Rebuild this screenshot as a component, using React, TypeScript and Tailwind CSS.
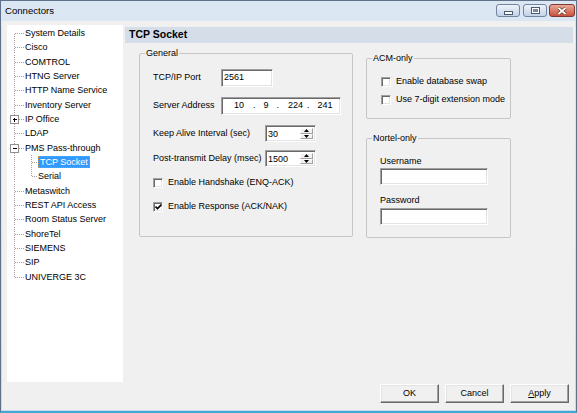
import React from "react";

type Node = {
  label: string;
  expander?: "plus" | "minus";
  child?: boolean;
  lastChild?: boolean;
  selected?: boolean;
};

const TREE: Node[] = [
  { label: "System Details" },
  { label: "Cisco" },
  { label: "COMTROL" },
  { label: "HTNG Server" },
  { label: "HTTP Name Service" },
  { label: "Inventory Server" },
  { label: "IP Office", expander: "plus" },
  { label: "LDAP" },
  { label: "PMS Pass-through", expander: "minus" },
  { label: "TCP Socket", child: true, selected: true },
  { label: "Serial", child: true, lastChild: true },
  { label: "Metaswitch" },
  { label: "REST API Access" },
  { label: "Room Status Server" },
  { label: "ShoreTel" },
  { label: "SIEMENS" },
  { label: "SIP" },
  { label: "UNIVERGE 3C" },
];

const ROW_H = 14.33;

function TreeLines({ node, first, last }: { node: Node; first: boolean; last: boolean }) {
  const w = node.child ? 31 : 18;
  const mid = 7.5;
  return (
    <svg width={w} height={ROW_H} className="shrink-0" fill="none" shapeRendering="crispEdges">
      <g stroke="#a0a0a0" strokeDasharray="1 1">
        <line x1="7.5" x2="7.5" y1={first ? mid : 0} y2={last ? mid : ROW_H} />
        {node.child ? (
          <>
            <line x1="24.5" x2="24.5" y1="0" y2={node.lastChild ? mid : ROW_H} />
            <line x1="25" x2="31" y1={mid} y2={mid} />
          </>
        ) : (
          <line x1={node.expander ? 12 : 8} x2="17" y1={mid} y2={mid} />
        )}
      </g>
      {node.expander && (
        <g>
          <rect x="3.5" y="3.5" width="8" height="8" fill="#fff" stroke="#8f8f8f" />
          <line x1="5.5" x2="10" y1="7.5" y2="7.5" stroke="#000" />
          {node.expander === "plus" && <line x1="7.5" x2="7.5" y1="5.5" y2="10" stroke="#000" />}
        </g>
      )}
    </svg>
  );
}

function Tree() {
  return (
    <div className="w-[116px] h-[357px] shrink-0 bg-white pt-[1px] text-[9px]">
      {TREE.map((node, i) => (
        <div key={node.label} className="flex items-center h-[14.33px] leading-[14.33px]">
          <TreeLines node={node} first={i === 0} last={i === TREE.length - 1} />
          {node.selected ? (
            <span className="bg-[#3399ff] text-white leading-[10px] px-[1px] border border-dotted border-[#d8923a]">
              {node.label}
            </span>
          ) : (
            <span className="whitespace-nowrap">{node.label}</span>
          )}
        </div>
      ))}
    </div>
  );
}

const sunken =
  "bg-white border border-[#a0a0a0] border-b-white border-r-white shadow-[inset_1px_1px_0_#696969,inset_-1px_-1px_0_#e3e3e3]";

function TextBox({ value, className }: { value?: string; className: string }) {
  return (
    <div className={`${sunken} ${className} flex items-center pl-[2px] text-[9px]`}>{value}</div>
  );
}

function Spinner({ value }: { value: string }) {
  return (
    <div className={`${sunken} w-[51px] h-[17px] flex p-[2px] text-[9px]`}>
      <div className="flex-1 leading-[13px]">{value}</div>
      <div className="w-[13px] flex flex-col">
        {[0, 1].map((k) => (
          <div
            key={k}
            className="flex-1 flex items-center justify-center bg-[#f0f0f0] border border-white border-b-[#a0a0a0] border-r-[#a0a0a0]"
          >
            <svg width="5" height="3" viewBox="0 0 5 3">
              <path d={k === 0 ? "M2.5 0L5 3H0Z" : "M0 0H5L2.5 3Z"} fill="#000" />
            </svg>
          </div>
        ))}
      </div>
    </div>
  );
}

function CheckBox({ label, checked }: { label: string; checked?: boolean }) {
  return (
    <div className="flex items-center h-[13px] text-[9px]">
      <div className={`${sunken} w-[10px] h-[10px] flex items-center justify-center`}>
        {checked && (
          <svg width="7" height="6" viewBox="0 0 7 6">
            <path d="M0.5 2.5L2.5 4.5L6.5 0.5" stroke="#000" strokeWidth="1.6" fill="none" />
          </svg>
        )}
      </div>
      <span className="ml-[5px] whitespace-nowrap">{label}</span>
    </div>
  );
}

function Group({ title, className, children }: { title: string; className: string; children: React.ReactNode }) {
  return (
    <fieldset className={`border border-[#c6c6c6] rounded-[2px] ${className}`}>
      <legend className="ml-[5px] px-[1px] text-[9px] leading-[11px]">{title}</legend>
      {children}
    </fieldset>
  );
}

function IpBox() {
  return (
    <div className={`${sunken} w-[120px] h-[18px] flex items-center text-[9px] pl-[12px]`}>
      <span>10</span>
      <span className="ml-[9px]">.</span>
      <span className="ml-[8px]">9</span>
      <span className="ml-[8px]">.</span>
      <span className="ml-[9px]">224</span>
      <span className="ml-[4px]">.</span>
      <span className="ml-[8px]">241</span>
    </div>
  );
}

function Button({ children }: { children: React.ReactNode }) {
  return (
    <div className="w-[59px] h-[19px] flex items-center justify-center text-[9px] bg-[#f0f0f0] border border-white border-b-[#696969] border-r-[#696969] shadow-[inset_-1px_-1px_0_#a0a0a0,inset_1px_1px_0_#e3e3e3]">
      {children}
    </div>
  );
}

function CaptionButton({ kind }: { kind: "min" | "max" | "close" }) {
  const base = "h-[13px] rounded-[3px] border flex items-center justify-center";
  if (kind === "close")
    return (
      <div className={`${base} w-[26px] border-[#7e3a2f] bg-gradient-to-b from-[#e9a898] to-[#c8503c]`}>
        <svg width="10" height="8" viewBox="0 0 10 8">
          <path d="M1.5 1L8.5 7M8.5 1L1.5 7" stroke="#5a2a22" strokeWidth="3.2" />
          <path d="M1.5 1L8.5 7M8.5 1L1.5 7" stroke="#fff" strokeWidth="1.8" />
        </svg>
      </div>
    );
  return (
    <div className={`${base} w-[24px] border-[#7085a0] bg-gradient-to-b from-[#eef3fa] to-[#c3d2e7]`}>
      {kind === "min" ? (
        <div className="w-[9px] h-[4px] mt-[4px] bg-white border border-[#4a5a72]" />
      ) : (
        <div className="w-[9px] h-[7px] bg-white border border-[#4a5a72] flex items-center justify-center">
          <div className="w-[5px] h-[3px] bg-[#7a8aa2]" />
        </div>
      )}
    </div>
  );
}

export default function App() {
  return (
    <div className="w-[577px] h-[413px] flex flex-col border border-[#60718a] border-b-2 border-b-[#3fa9d4] bg-gradient-to-b from-[#dce7f4] to-[#c8d8ec] text-black font-['Liberation_Sans',Arial,sans-serif]">
      <div className="h-[20px] flex items-start shrink-0">
        <div className="pl-[4px] pt-[4px] text-[9.6px] leading-[12px]">Connectors</div>
        <div className="ml-auto flex pt-[3px] pr-[1px]">
          <CaptionButton kind="min" />
          <div className="ml-[3px]">
            <CaptionButton kind="max" />
          </div>
          <div className="ml-[2px]">
            <CaptionButton kind="close" />
          </div>
        </div>
      </div>

      <div className="flex-1 mx-[1px] mb-[1px] bg-[#f0f0f0] flex flex-col pt-[4px] pl-[5px] pr-[2px]">
        <div className="flex">
          <Tree />

          <div className="flex-1 ml-[2px] flex flex-col">
            <div className="mt-[2px] h-[16px] bg-[#d4dde8] pl-[4px] flex items-center text-[10.5px] font-bold">
              TCP Socket
            </div>

            <div className="flex items-start pl-[14px]">
              <Group title="General" className="w-[214px] h-[189px] mt-[4.5px]">
                <div className="flex flex-col pl-[13px] text-[9px]">
                  <div className="flex items-center mt-[10.5px]">
                    <span className="w-[68px]">TCP/IP Port</span>
                    <TextBox value="2561" className="w-[52px] h-[18px]" />
                  </div>
                  <div className="flex items-center mt-[10px]">
                    <span className="w-[68px]">Server Address</span>
                    <IpBox />
                  </div>
                  <div className="flex items-center mt-[10px]">
                    <span className="w-[112px]">Keep Alive Interval (sec)</span>
                    <Spinner value="30" />
                  </div>
                  <div className="flex items-center mt-[8px]">
                    <span className="w-[112px]">Post-transmit Delay (msec)</span>
                    <Spinner value="1500" />
                  </div>
                  <div className="mt-[9.5px]">
                    <CheckBox label="Enable Handshake (ENQ-ACK)" />
                  </div>
                  <div className="mt-[10.5px]">
                    <CheckBox label="Enable Response (ACK/NAK)" checked />
                  </div>
                </div>
              </Group>

              <div className="ml-[13px] flex flex-col">
                <Group title="ACM-only" className="w-[145px] h-[66.5px] mt-[9.5px]">
                  <div className="flex flex-col pl-[14px] mt-[11.5px]">
                    <CheckBox label="Enable database swap" />
                    <div className="mt-[5px]">
                      <CheckBox label="Use 7-digit extension mode" />
                    </div>
                  </div>
                </Group>

                <Group title="Nortel-only" className="w-[145px] h-[105px] mt-[13.5px]">
                  <div className="flex flex-col pl-[13px] text-[9px]">
                    <span className="mt-[12px] leading-[11px]">Username</span>
                    <TextBox className="w-[108px] h-[17px] mt-[1px]" />
                    <span className="mt-[10px] leading-[11px]">Password</span>
                    <TextBox className="w-[108px] h-[17px] mt-[2px]" />
                  </div>
                </Group>
              </div>
            </div>
          </div>
        </div>

        <div className="flex justify-end gap-[6px] mt-[2px] pr-[4px]">
          <Button>OK</Button>
          <Button>Cancel</Button>
          <Button>
            <span className="underline">A</span>pply
          </Button>
        </div>
      </div>
    </div>
  );
}
